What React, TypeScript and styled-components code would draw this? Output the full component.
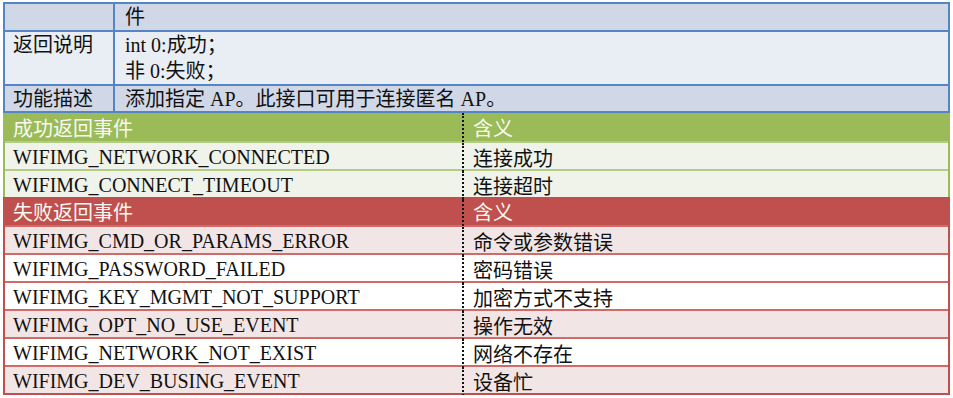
import React from "react";
import styled, { createGlobalStyle } from "styled-components";

const GlobalStyle = createGlobalStyle`
	html, body {
		margin: 0;
		padding: 0;
		background: #ffffff;
	}
	body {
		font-family: "Liberation Serif", "Noto Sans CJK SC", serif;
		font-size: 20px;
		color: #111111;
	}
`;

const Page = styled.div`
	width: 953px;
	padding: 2px 3px 0 3px;
	box-sizing: border-box;
`;

// top part: the API description table (continued from previous page)
const InfoTable = styled.div`
	display: grid;
	grid-template-columns: 108px 1fr;
	grid-template-rows: 26px 52px 25px;
	gap: 2px;
	padding: 2px;
	background: #5585c5;
`;

const InfoCell = styled.div<{ $shade: "dark" | "light"; $first?: boolean }>`
	background: ${(p) => (p.$shade === "dark" ? "#d0d8e8" : "#e9edf4")};
	padding: 0 0 0 ${(p) => (p.$first ? "8px" : "10px")};
	display: flex;
	flex-direction: column;
	justify-content: center;
	line-height: 26px;
	white-space: nowrap;
`;

// bottom part: event tables
const tones = {
	green: {
		head: "#9bbb59",
		line: "#b3cc85",
		edge: "#9bbb59",
		band: "#eff3e9",
		plain: "#eff3e9",
	},
	red: {
		head: "#c0504d",
		line: "#d06b68",
		edge: "#c0504d",
		band: "#f2e5e5",
		plain: "#ffffff",
	},
};

type Tone = keyof typeof tones;

const Section = styled.div<{ $tone: Tone; $last?: boolean }>`
	border-left: 2px solid ${(p) => tones[p.$tone].edge};
	border-right: 2px solid ${(p) => tones[p.$tone].edge};
	border-bottom: ${(p) =>
		p.$last ? `2px solid ${tones[p.$tone].edge}` : "none"};
`;

const Row = styled.div<{ $tone: Tone; $head?: boolean; $band?: boolean }>`
	display: grid;
	grid-template-columns: 457px 1fr;
	height: 28px;
	box-sizing: border-box;
	border-top: ${(p) =>
		p.$head ? "none" : `2px solid ${tones[p.$tone].line}`};
	background: ${(p) =>
		p.$head
			? tones[p.$tone].head
			: p.$band
				? tones[p.$tone].band
				: tones[p.$tone].plain};
	color: ${(p) => (p.$head ? "#f7f9f2" : "#111111")};
`;

const NameCell = styled.div`
	padding-left: 8px;
	display: flex;
	align-items: center;
	white-space: nowrap;
`;

const MeaningCell = styled.div`
	border-left: 2px dotted #111111;
	padding-left: 9px;
	display: flex;
	align-items: center;
	white-space: nowrap;
`;

interface EventRow {
	name: string;
	meaning: string;
	band?: boolean;
}

const okEvents: EventRow[] = [
	{ name: "WIFIMG_NETWORK_CONNECTED", meaning: "连接成功", band: true },
	{ name: "WIFIMG_CONNECT_TIMEOUT", meaning: "连接超时", band: true },
];

const failEvents: EventRow[] = [
	{ name: "WIFIMG_CMD_OR_PARAMS_ERROR", meaning: "命令或参数错误", band: true },
	{ name: "WIFIMG_PASSWORD_FAILED", meaning: "密码错误" },
	{ name: "WIFIMG_KEY_MGMT_NOT_SUPPORT", meaning: "加密方式不支持" },
	{ name: "WIFIMG_OPT_NO_USE_EVENT", meaning: "操作无效", band: true },
	{ name: "WIFIMG_NETWORK_NOT_EXIST", meaning: "网络不存在" },
	{ name: "WIFIMG_DEV_BUSING_EVENT", meaning: "设备忙", band: true },
];

function EventSection({
	tone,
	title,
	rows,
	last,
}: {
	tone: Tone;
	title: string;
	rows: EventRow[];
	last?: boolean;
}) {
	return (
		<Section $tone={tone} $last={last}>
			<Row $tone={tone} $head>
				<NameCell>{title}</NameCell>
				<MeaningCell>含义</MeaningCell>
			</Row>
			{rows.map((r) => (
				<Row key={r.name} $tone={tone} $band={r.band}>
					<NameCell>{r.name}</NameCell>
					<MeaningCell>{r.meaning}</MeaningCell>
				</Row>
			))}
		</Section>
	);
}

export default function App() {
	return (
		<Page>
			<GlobalStyle />
			<InfoTable>
				<InfoCell $shade="dark" $first />
				<InfoCell $shade="dark">件</InfoCell>
				<InfoCell $shade="light" $first>
					<span>返回说明</span>
					<span>&nbsp;</span>
				</InfoCell>
				<InfoCell $shade="light">
					<span>int 0:成功；</span>
					<span>非 0:失败；</span>
				</InfoCell>
				<InfoCell $shade="dark" $first>
					功能描述
				</InfoCell>
				<InfoCell $shade="dark">添加指定 AP。此接口可用于连接匿名 AP。</InfoCell>
			</InfoTable>
			<EventSection tone="green" title="成功返回事件" rows={okEvents} />
			<EventSection tone="red" title="失败返回事件" rows={failEvents} last />
		</Page>
	);
}
